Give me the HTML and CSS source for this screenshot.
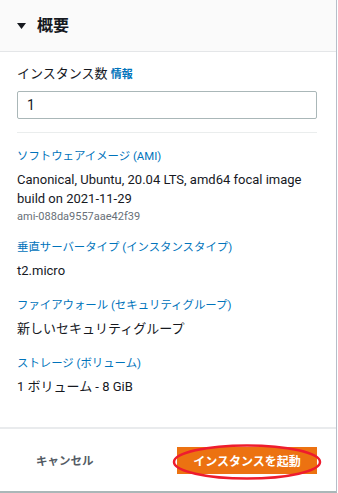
FILE: index.html
```html
<!DOCTYPE html>
<html lang="ja">
<head>
    <meta charset="UTF-8">
    <meta name="viewport" content="width=device-width, initial-scale=1.0">
    <title>概要</title>
    <link rel="stylesheet" href="styles.css">
</head>
<body>
    <div class="summary-panel">
        <!-- Header -->
        <div class="panel-header">
            <svg class="caret" width="9" height="6" viewBox="0 0 9 6"><polygon points="0,0 9,0 4.5,6" fill="#16191f"/></svg>
            <h2 class="panel-title">概要</h2>
        </div>

        <!-- Body -->
        <div class="panel-body">
            <div class="field-label">インスタンス数 <a class="info-link">情報</a></div>
            <input class="text-input" type="text" value="1">
            <div class="divider"></div>

            <div class="summary-item">
                <a class="item-title">ソフトウェアイメージ (AMI)</a>
                <div class="item-value">Canonical, Ubuntu, 20.04 LTS, amd64 focal image build on 2021-11-29</div>
                <div class="item-sub">ami-088da9557aae42f39</div>
            </div>

            <div class="summary-item">
                <a class="item-title">垂直サーバータイプ (インスタンスタイプ)</a>
                <div class="item-value">t2.micro</div>
            </div>

            <div class="summary-item">
                <a class="item-title">ファイアウォール (セキュリティグループ)</a>
                <div class="item-value">新しいセキュリティグループ</div>
            </div>

            <div class="summary-item">
                <a class="item-title">ストレージ (ボリューム)</a>
                <div class="item-value">1 ボリューム - 8 GiB</div>
            </div>
        </div>

        <!-- Footer -->
        <div class="panel-footer">
            <button class="btn-cancel">キャンセル</button>
            <div class="launch-wrap">
                <button class="btn-launch">インスタンスを起動</button>
                <svg class="highlight" width="150" height="38" viewBox="0 0 150 38"><ellipse cx="75" cy="19" rx="73" ry="16.5" fill="none" stroke="#ee1c2e" stroke-width="2.5"/></svg>
            </div>
        </div>
    </div>
</body>
</html>
```

FILE: styles.css
```css
/* Page */
body {
    margin: 0;
    background: #fff;
    font-family: Roboto, 'Noto Sans CJK JP', sans-serif;
    color: #16191f;
}

.summary-panel {
    width: 336px;
    height: 491px;
    border-right: 1px solid #b6bec9;
    border-bottom: 2px solid #aab7b8;
    display: flex;
    flex-direction: column;
}

/* Header */
.panel-header {
    height: 51px;
    background: #fafafa;
    border-bottom: 1px solid #e4e6e8;
    display: flex;
    align-items: center;
    padding-left: 17px;
    gap: 11px;
}

.caret {
    display: block;
}

.panel-title {
    margin: 0;
    font-size: 16px;
    font-weight: 700;
    line-height: 22px;
    color: #16191f;
}

/* Body */
.panel-body {
    flex: 1;
    padding: 12px 19px 0 17px;
}

.field-label {
    font-size: 13px;
    line-height: 20px;
    color: #16191f;
}

.info-link {
    color: #0073bb;
    font-weight: 700;
    font-size: 11px;
}

.text-input {
    display: block;
    box-sizing: border-box;
    width: 100%;
    height: 28px;
    margin-top: 6px;
    padding: 0 9px;
    border: 1px solid #aab7b8;
    border-radius: 2px;
    font-family: inherit;
    font-size: 14px;
    color: #16191f;
}

.divider {
    height: 1px;
    background: #eaeded;
    margin: 13px 0 13px;
}

.summary-item {
    margin-bottom: 15px;
}

.item-title {
    display: block;
    color: #0073bb;
    font-size: 11.4px;
    line-height: 20px;
}

.item-value {
    margin-top: 4px;
    font-size: 13px;
    line-height: 19px;
    color: #16191f;
}

.item-sub {
    font-size: 11px;
    line-height: 17px;
    margin-bottom: -3px;
    color: #687078;
}

/* Footer */
.panel-footer {
    height: 62px;
    border-top: 2px solid #e9ebed;
    display: flex;
    align-items: center;
    justify-content: space-between;
    padding: 0 19px 0 36px;
}

.btn-cancel {
    border: none;
    background: none;
    padding: 0;
    font-family: inherit;
    font-size: 11.5px;
    font-weight: 700;
    color: #545b64;
}

.launch-wrap {
    position: relative;
}

.btn-launch {
    display: block;
    width: 140px;
    height: 27px;
    border: none;
    border-radius: 0;
    background: #ec7211;
    color: #fff;
    font-family: inherit;
    font-size: 12px;
    font-weight: 700;
}

/* Red annotation ring */
.highlight {
    position: absolute;
    left: -5px;
    top: -4px;
    pointer-events: none;
}
```
